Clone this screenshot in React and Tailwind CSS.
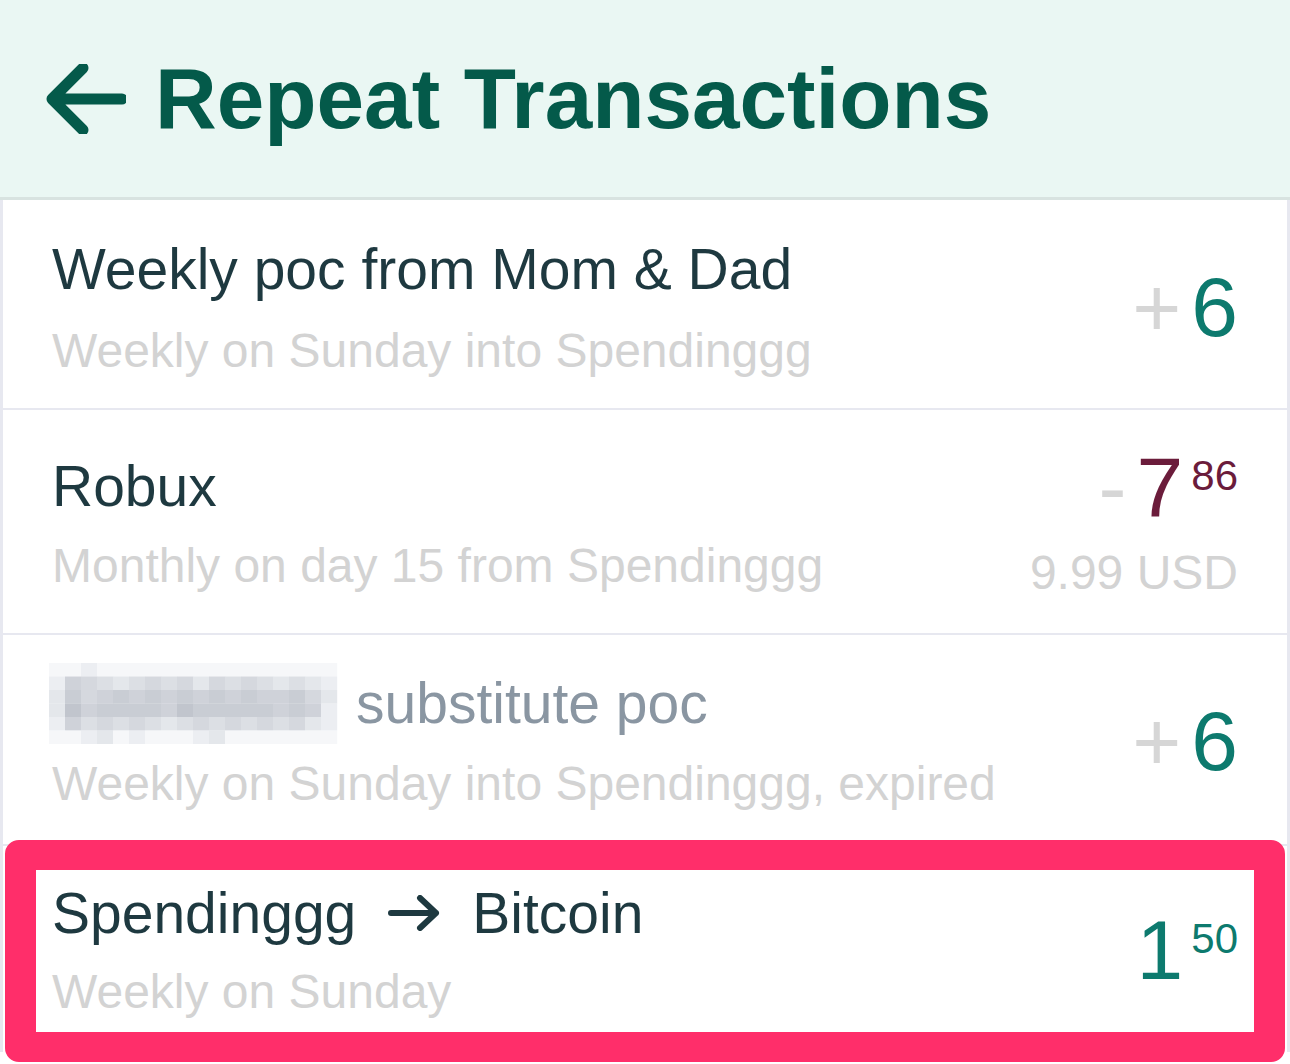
import React from "react";

const MOSAIC = [
  "001000000000000000",
  "154323434243432321",
  "264565656565655642",
  "275666657666665651",
  "153434323434343421",
  "001201000120000000",
];
const SHADES = ["#f6f7f9", "#eceef2", "#e4e7eb", "#dcdfe4", "#d5d8de", "#cfd2d9", "#c9cdd4", "#c1c5cd"];

function Mosaic() {
  const cells = [];
  MOSAIC.forEach((row, r) => {
    row.split("").forEach((c, i) => {
      cells.push(
        <rect key={r + "-" + i} x={i * 16} y={r * 13.5} width={16.2} height={13.7} fill={SHADES[Number(c)]} />
      );
    });
  });
  return (
    <svg width="290" height="81" viewBox="0 0 288 81" className="shrink-0">
      {cells}
    </svg>
  );
}

function Amount({ sign, whole, cents, color }) {
  return (
    <div className="flex items-start leading-none">
      {sign && <span className="mr-[10px] text-[84px] leading-none text-[#d6d6d6]">{sign}</span>}
      <span className={`text-[84px] leading-none ${color}`}>{whole}</span>
      {cents && <span className={`ml-[8px] mt-[10px] text-[42px] leading-none ${color}`}>{cents}</span>}
    </div>
  );
}

export default function App() {
  return (
    <div className="w-[1290px] h-[1064px] overflow-hidden bg-white font-['Liberation_Sans',Arial,sans-serif] relative">
      <header className="h-[200px] bg-[#eaf7f3] border-b-[3px] border-[#d8e3e0] flex items-center pl-[46px]">
        <svg width="80" height="70" viewBox="0 0 80 70" className="shrink-0">
          <path d="M6 35 H76 M37 4 L6 35 L37 66" fill="none" stroke="#045a4a" strokeWidth="11" strokeLinecap="round" strokeLinejoin="round" />
        </svg>
        <h1 className="ml-[29px] text-[85.5px] font-bold leading-none text-[#045a4a]">Repeat Transactions</h1>
      </header>

      <div className="border-x-[3px] border-[#e7e8f0]">
        <div className="flex items-center justify-between px-[49px] pt-[35px] pb-[29px] border-b-[2px] border-[#e7e8f0]">
          <div>
            <div className="text-[57px] leading-[68px] text-[#1e3940]">Weekly poc from Mom &amp; Dad</div>
            <div className="mt-[20px] text-[48px] leading-[56px] text-[#d3d3d3]">Weekly on Sunday into Spendinggg</div>
          </div>
          <Amount sign="+" whole="6" color="text-[#0d7a6e]" />
        </div>

        <div className="flex items-center justify-between px-[49px] pt-[35px] pb-[32px] border-b-[2px] border-[#e7e8f0]">
          <div>
            <div className="text-[57px] leading-[68px] text-[#1e3940]">Robux</div>
            <div className="mt-[18px] text-[48px] leading-[56px] text-[#d3d3d3]">Monthly on day 15 from Spendinggg</div>
          </div>
          <div className="flex flex-col items-end">
            <Amount sign="-" whole="7" cents="86" color="text-[#6b1c3b]" />
            <div className="mt-[16px] text-[48px] leading-[56px] text-[#d3d3d3]">9.99 USD</div>
          </div>
        </div>

        <div className="flex items-center justify-between px-[49px] pt-[34px] pb-[32px] border-b-[2px] border-[#e7e8f0]">
          <div>
            <div className="flex items-center h-[68px]">
              <div className="-ml-[4px] mr-[18px]">
                <Mosaic />
              </div>
              <span className="text-[57px] leading-[68px] text-[#8a96a2]">substitute poc</span>
            </div>
            <div className="mt-[19px] text-[48px] leading-[56px] text-[#d3d3d3]">Weekly on Sunday into Spendinggg, expired</div>
          </div>
          <Amount sign="+" whole="6" color="text-[#0d7a6e]" />
        </div>

        <div className="flex items-center justify-between px-[49px] pt-[33px] pb-[32px]">
          <div>
            <div className="flex items-center text-[57px] leading-[68px] text-[#1e3940]">
              <span>Spendinggg</span>
              <svg width="52" height="36" viewBox="0 0 52 36" className="mx-[32px] shrink-0">
                <path d="M3 18 H48 M32 3 L48 18 L32 33" fill="none" stroke="#1e3940" strokeWidth="6" strokeLinecap="round" strokeLinejoin="round" />
              </svg>
              <span>Bitcoin</span>
            </div>
            <div className="mt-[17px] text-[48px] leading-[56px] text-[#d3d3d3]">Weekly on Sunday</div>
          </div>
          <Amount whole="1" cents="50" color="text-[#0d7a6e]" />
        </div>
      </div>

      <div className="absolute left-[5px] top-[840px] w-[1280px] h-[222px] rounded-[14px] border-x-[31px] border-y-[30px] border-[#ff2e6a]" />
    </div>
  );
}
